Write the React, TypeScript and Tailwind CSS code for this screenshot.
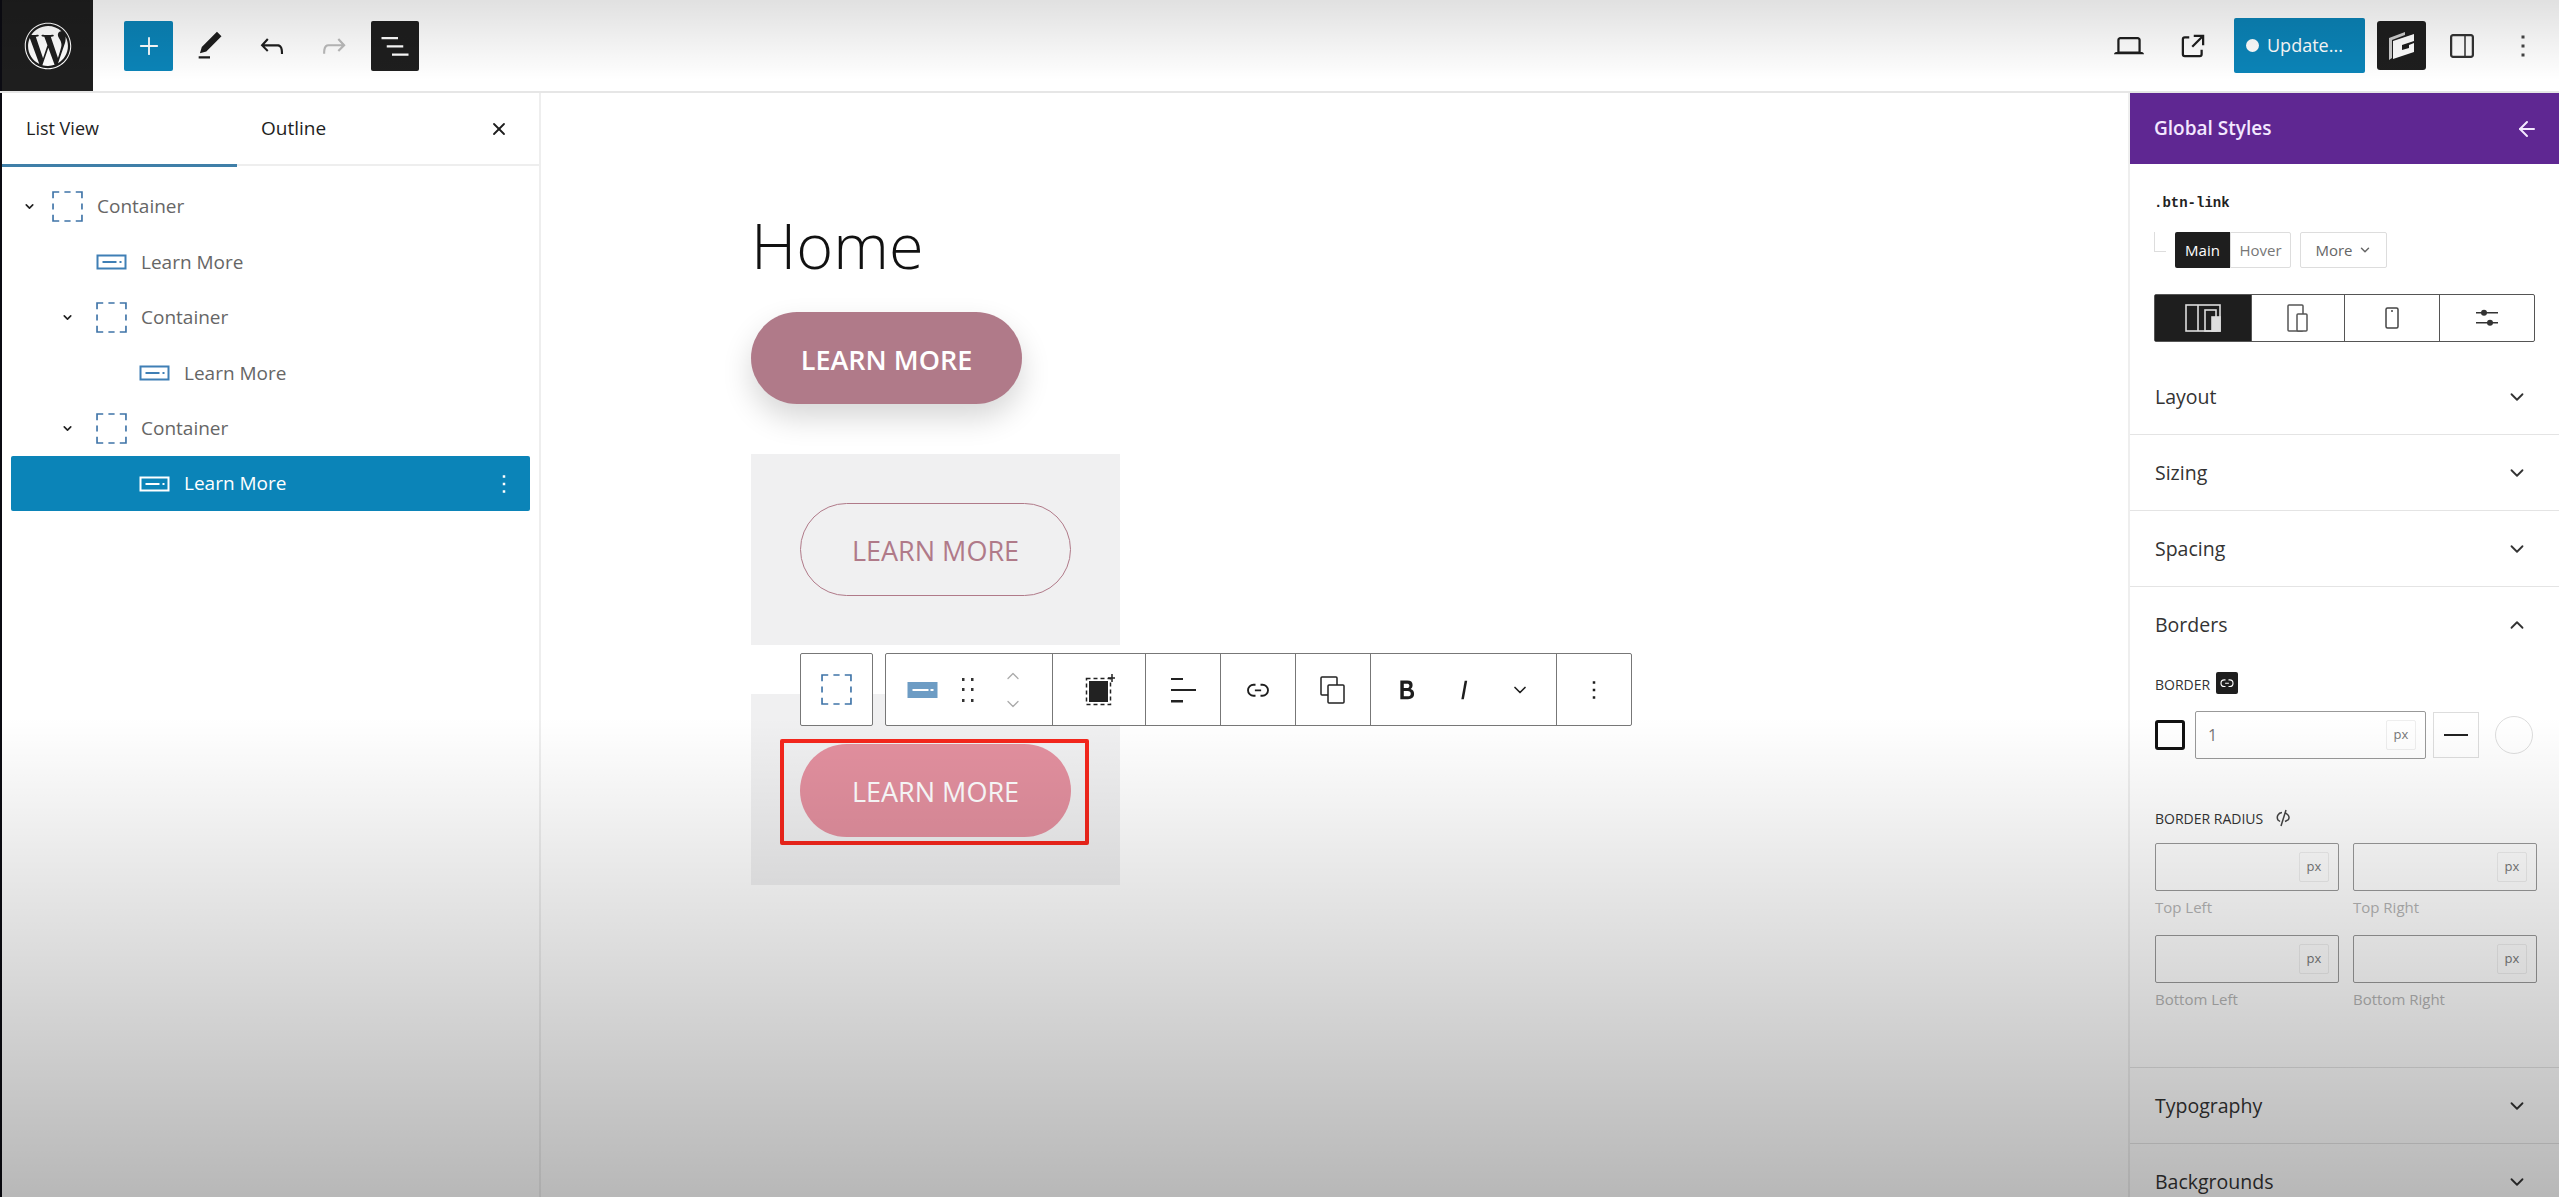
import React from "react";
import { FaWordpress } from "react-icons/fa";
import { ChevronDown, ChevronUp, ArrowLeft, X, Plus } from "lucide-react";

const P = ({ d, className = "", fill = "currentColor" }: { d: string; className?: string; fill?: string }) => (
  <svg viewBox="0 0 24 24" className={className} fill={fill}><path d={d} /></svg>
);

const ic = {
  pen: "M20.1 5.1L16.9 2 6.2 12.7l-1.3 4.4 4.5-1.3L20.1 5.1zM4 20.8h8v-1.5H4v1.5z",
  undo: "M18.3 11.7c-.6-.6-1.4-.9-2.3-.9H6.7l2.9-3.3-1.1-1-4.5 5L8.5 16l1-1-2.7-2.7H16c.5 0 .9.2 1.3.5 1 1 1 3.4 1 4.5v.3h1.5v-.2c0-1.5 0-4.3-1.5-5.7z",
  redo: "M15.6 6.5l-1.1 1 2.9 3.3H8c-.9 0-1.7.3-2.3.9-1.4 1.5-1.4 4.2-1.4 5.6v.2h1.5v-.3c0-1.1 0-3.5 1-4.5.3-.3.7-.5 1.3-.5h9.2L14.5 15l1.1 1.1 4.6-4.6-4.6-5z",
  list: "M3 6h11v1.5H3V6zm3.5 5.5h11V13h-11v-1.5zM21 17H10v1.5h11V17z",
  laptop: "M20.5 16h-.7V8c0-1.1-.9-2-2-2H6.2c-1.1 0-2 .9-2 2v8h-.7c-.8 0-1.5.7-1.5 1.5h20c0-.8-.7-1.5-1.5-1.5zM5.7 8c0-.3.2-.5.5-.5h11.6c.3 0 .5.2.5.5v7.6H5.7V8z",
  ext: "M19.5 4.5h-7V6h4.44l-5.97 5.97 1.06 1.06L18 7.06v4.44h1.5v-7Zm-13 1a2 2 0 0 0-2 2v10a2 2 0 0 0 2 2h10a2 2 0 0 0 2-2v-3H17v3a.5.5 0 0 1-.5.5h-10a.5.5 0 0 1-.5-.5v-10a.5.5 0 0 1 .5-.5h3V5.5h-3Z",
  kebab: "M13 19h-2v-2h2v2zm0-6h-2v-2h2v2zm0-6h-2V5h2v2z",
  link: "M10 17.389H8.444A5.194 5.194 0 1 1 8.444 7H10v1.5H8.444a3.694 3.694 0 0 0 0 7.389H10v1.5ZM14 7h1.556a5.194 5.194 0 0 1 0 10.39H14v-1.5h1.556a3.694 3.694 0 0 0 0-7.39H14V7Zm-4.5 6h5v-1.5h-5V13Z",
  bold: "M14.7 11.3c1-.6 1.5-1.6 1.5-3 0-2.3-1.3-3.4-4-3.4H7v14h5.8c1.4 0 2.5-.3 3.3-1 .8-.7 1.2-1.7 1.2-2.9.1-1.9-.8-3.1-2.6-3.7zm-5.1-4h2.3c.6 0 1.1.1 1.4.4.3.3.5.7.5 1.2s-.2 1-.5 1.2c-.3.3-.8.4-1.4.4H9.6V7.3zm4.6 9c-.4.3-1 .4-1.7.4H9.6v-3.9h2.9c.7 0 1.3.2 1.7.5.4.3.6.8.6 1.5s-.2 1.2-.6 1.5z",
  italic: "M12.5 5L10 19h1.9l2.5-14z",
};

const ContainerIcon = ({ className = "" }: { className?: string }) => (
  <svg viewBox="0 0 30 30" className={className} fill="none" stroke="#3f74a8" strokeWidth="1.6">
    <path d="M1 7V1h6M12 1h6M23 1h6v6M29 12v6M29 23v6h-6M18 29h-6M7 29H1v-6M1 18v-6" />
  </svg>
);

const ButtonIcon = ({ className = "", color = "#3f7fb5" }: { className?: string; color?: string }) => (
  <svg viewBox="0 0 30 16" className={className} fill="none" stroke={color}>
    <rect x="1" y="1.5" width="28" height="13" strokeWidth="2" />
    <path d="M6 8h14" strokeWidth="2" />
    <path d="M23 8h2" strokeWidth="2" />
  </svg>
);

function TreeRow({ indent, chevron, label, kind, selected, chevW = 23 }: { indent: number; chevron?: boolean; label: string; kind: "c" | "b"; selected?: boolean; chevW?: number }) {
  const base = selected ? "bg-[#0b84b8] text-white rounded-[2px]" : "text-[#666]";
  return (
    <div className={`relative flex h-[55.4px] items-center ${base}`}>
      <div className="flex items-center" style={{ paddingLeft: indent }}>
        <div className="flex justify-start" style={{ width: chevW }}>
          {chevron && <ChevronDown className="h-[13px] w-[13px] text-[#222]" strokeWidth={3} />}
        </div>
        {kind === "c" ? <ContainerIcon className="h-[31px] w-[31px]" /> : <ButtonIcon className="h-[16px] w-[31px]" color={selected ? "#fff" : "#3f7fb5"} />}
        <span className="ml-[14px] text-[19px]">{label}</span>
      </div>
      {selected && <P d={ic.kebab} className="absolute right-[11px] h-[30px] w-[30px] text-white" />}
    </div>
  );
}

function LeftPanel() {
  return (
    <aside className="w-[539px] shrink-0 border-r-2 border-[#eeeeee] bg-white">
      <div className="flex h-[73px] items-center border-b-2 border-[#eeeeee] text-[18px] text-[#1e1e1e]">
        <div className="relative flex h-[73px] w-[235px] items-center pl-[24px]">
          List View
          <div className="absolute bottom-[-2px] left-0 h-[3px] w-full bg-[#3f7fa8]" />
        </div>
        <div className="flex h-full flex-1 items-center pl-[24px] text-[19px]">Outline</div>
        <X className="mr-[30px] h-[20px] w-[20px] text-[#1e1e1e]" strokeWidth={2.2} />
      </div>
      <div className="px-[9px] pt-[13px]">
        <TreeRow indent={12} chevW={29} chevron label="Container" kind="c" />
        <TreeRow indent={62} label="Learn More" kind="b" />
        <TreeRow indent={50} chevW={35} chevron label="Container" kind="c" />
        <TreeRow indent={105} label="Learn More" kind="b" />
        <TreeRow indent={50} chevW={35} chevron label="Container" kind="c" />
        <TreeRow indent={105} label="Learn More" kind="b" selected />
      </div>
    </aside>
  );
}

const cellLine = "flex h-full items-center justify-center border-r border-[#777]";

function BlockToolbar() {
  return (
    <div className="absolute left-[259px] top-[560px] flex h-[73px] gap-[12px] text-[#1e1e1e]">
      <div className="flex w-[73px] items-center justify-center rounded-[2px] border border-[#777] bg-white">
        <ContainerIcon className="h-[31px] w-[31px]" />
      </div>
      <div className="flex w-[747px] rounded-[2px] border border-[#777] bg-white">
        <div className={`${cellLine} w-[167px] justify-start pl-[21px]`}>
          <svg viewBox="0 0 30 16" className="h-[16px] w-[31px]"><rect width="30" height="16" fill="#6d9cc4" /><path d="M5 8h16M23 8h3" stroke="#fff" strokeWidth="2" /></svg>
          <svg viewBox="0 0 16 26" className="ml-[22px] h-[26px] w-[16px] text-[#333]" fill="currentColor">
            <rect x="2" y="1" width="2.5" height="3" /><rect x="11" y="1" width="2.5" height="3" />
            <rect x="2" y="11" width="2.5" height="3" /><rect x="11" y="11" width="2.5" height="3" />
            <rect x="2" y="22" width="2.5" height="3" /><rect x="11" y="22" width="2.5" height="3" />
          </svg>
          <div className="ml-[27px] flex flex-col gap-[8px] text-[#aaa]">
            <ChevronUp className="h-[20px] w-[20px]" strokeWidth={1.5} />
            <ChevronDown className="h-[20px] w-[20px]" strokeWidth={1.5} />
          </div>
        </div>
        <div className={`${cellLine} w-[93px]`}>
          <svg viewBox="0 0 32 32" className="h-[32px] w-[32px]" fill="none" stroke="#222">
            <rect x="6" y="7" width="19" height="21" fill="#222" stroke="none" />
            <rect x="3.5" y="4.5" width="24" height="26" strokeDasharray="4 3" strokeWidth="1.5" />
            <path d="M29 0v8M25 4h8" strokeWidth="1.5" />
          </svg>
        </div>
        <div className={`${cellLine} w-[75px]`}>
          <svg viewBox="0 0 26 26" className="h-[26px] w-[26px]" fill="#222">
            <rect x="1" y="1" width="12" height="2" /><rect x="1" y="12" width="25" height="2" /><rect x="1" y="23" width="12" height="2.5" />
          </svg>
        </div>
        <div className={`${cellLine} w-[75px]`}><P d={ic.link} className="h-[30px] w-[30px]" /></div>
        <div className={`${cellLine} w-[75px]`}>
          <svg viewBox="0 0 28 28" className="h-[28px] w-[28px]" fill="#fff" stroke="#222" strokeWidth="1.5">
            <rect x="2" y="1" width="16" height="18" rx="1" />
            <rect x="9" y="9" width="16" height="18" rx="1" />
          </svg>
        </div>
        <div className={`${cellLine} w-[186px] justify-start`}>
          <P d={ic.bold} className="ml-[20px] h-[32px] w-[32px]" />
          <P d={ic.italic} className="ml-[25px] h-[32px] w-[32px]" />
          <ChevronDown className="ml-[30px] h-[20px] w-[20px]" strokeWidth={2} />
        </div>
        <div className="flex h-full flex-1 items-center justify-center"><P d={ic.kebab} className="h-[30px] w-[30px]" /></div>
      </div>
    </div>
  );
}

const labelFont = "font-['Open_Sans',sans-serif] text-[27px] leading-none pt-[2px]";

function Canvas() {
  return (
    <main className="relative flex-1 bg-white px-[210px] pt-[118px]">
      <h1 className="text-[63px] font-light leading-[68px] text-[#111]">Home</h1>
      <button className={`mt-[33px] block h-[92px] w-[271px] rounded-full bg-[#b07a89] font-semibold text-white shadow-[0_14px_30px_rgba(0,0,0,0.16)] ${labelFont}`}>LEARN MORE</button>
      <section className="mt-[50px] h-[191px] w-[369px] bg-[#f0f0f1] pl-[49px] pt-[49px]">
        <button className={`h-[93px] w-[271px] rounded-full border border-[#b07a89] font-medium text-[#b07a89] ${labelFont}`}>LEARN MORE</button>
      </section>
      <section className="mt-[49px] h-[191px] w-[369px] bg-[#f0f0f1] pl-[29px] pt-[45px]">
        <div className="h-[106px] w-[309px] rounded-[2px] border-[4px] border-[#f5261c] pl-[16px] pt-[1px]">
          <button className={`h-[93px] w-[271px] rounded-full bg-[#e3909f] font-medium text-white ${labelFont}`}>LEARN MORE</button>
        </div>
      </section>
      <BlockToolbar />
    </main>
  );
}

function AccRow({ label, open }: { label: string; open?: boolean }) {
  return (
    <div className={`flex h-[76px] items-center justify-between pl-[25px] pr-[31px] text-[19.5px] text-[#333] ${open ? "" : "border-b border-[#e4e4e4]"}`}>
      <span>{label}</span>
      {open ? <ChevronUp className="h-[22px] w-[22px]" strokeWidth={2} /> : <ChevronDown className="h-[22px] w-[22px]" strokeWidth={2} />}
    </div>
  );
}

function Px({ cls = "" }: { cls?: string }) {
  return <span className={`flex h-[30px] w-[30px] items-center justify-center rounded-[2px] border border-[#eee] text-[13px] text-[#777] ${cls}`}>px</span>;
}

function Radius({ label }: { label: string }) {
  return (
    <div>
      <div className="flex h-[48px] w-[184px] items-center justify-end rounded-[2px] border border-[#999] pr-[9px]"><Px /></div>
      <div className="mt-[8px] text-[15px] leading-[16px] text-[#b5b5b5]">{label}</div>
    </div>
  );
}

function RightPanel() {
  return (
    <aside className="w-[431px] shrink-0 border-l-2 border-[#eeeeee] bg-white">
      <div className="flex h-[71px] items-center justify-between bg-[#5f2792] pl-[24px] pr-[20px] text-[#f3e8ff]">
        <span className="text-[19px] font-semibold">Global Styles</span>
        <ArrowLeft className="h-[24px] w-[24px]" strokeWidth={2} />
      </div>
      <div className="pl-[24px] pt-[30px]">
        <div className="font-['Liberation_Mono',monospace] text-[14px] font-bold leading-[18px] text-[#222]">.btn-link</div>
        <div className="relative mt-[20px] flex h-[36px] pl-[21px] text-[15px]">
          <div className="absolute left-0 top-0 h-[20px] w-[12px] border-b border-l border-[#ddd]" />
          <span className="flex w-[55px] items-center justify-center rounded-l-[2px] bg-[#1e1e1e] text-white">Main</span>
          <span className="flex w-[61px] items-center justify-center rounded-r-[2px] border border-[#ddd] text-[#777]">Hover</span>
          <span className="ml-[9px] flex w-[87px] items-center justify-center gap-[5px] rounded-[2px] border border-[#ddd] text-[#666]">More <ChevronDown className="h-[14px] w-[14px]" strokeWidth={2.5} /></span>
        </div>
        <div className="mt-[26px] flex h-[48px] w-[381px] rounded-[2px] border border-[#555]">
          <div className="flex w-[96px] items-center justify-center bg-[#1e1e1e]">
            <svg viewBox="0 0 36 28" className="h-[28px] w-[36px]" fill="none" stroke="#ddd" strokeWidth="1.6">
              <rect x="1" y="1" width="34" height="26" /><path d="M13 1v26" /><rect x="20" y="6" width="11" height="21" /><rect x="27" y="13" width="8" height="14" fill="#ddd" />
            </svg>
          </div>
          <div className="flex w-[94px] items-center justify-center border-x border-[#555]">
            <svg viewBox="0 0 24 28" className="h-[28px] w-[24px]" fill="#fff" stroke="#555" strokeWidth="1.5">
              <rect x="2" y="1" width="15" height="26" rx="1" /><rect x="11" y="10" width="10" height="17" rx="1" />
            </svg>
          </div>
          <div className="flex w-[95px] items-center justify-center border-r border-[#555]">
            <svg viewBox="0 0 14 22" className="h-[22px] w-[14px]" fill="none" stroke="#444" strokeWidth="1.5"><rect x="1" y="1" width="12" height="20" rx="1.5" /><path d="M6 4h2" /></svg>
          </div>
          <div className="flex flex-1 items-center justify-center">
            <svg viewBox="0 0 22 18" className="h-[18px] w-[22px]" fill="#333"><rect y="3" width="22" height="1.5" /><rect y="13" width="22" height="1.5" /><circle cx="8" cy="3.7" r="3" /><circle cx="14" cy="13.7" r="3" /></svg>
          </div>
        </div>
      </div>
      <div className="mt-[17px]">
        <AccRow label="Layout" />
        <AccRow label="Sizing" />
        <AccRow label="Spacing" />
        <AccRow label="Borders" open />
      </div>
      <div className="pl-[25px] pr-[20px] pt-[9px]">
        <div className="flex h-[24px] items-center gap-[6px] text-[14px] text-[#333]">
          BORDER
          <span className="-mt-[3px] flex h-[22px] w-[22px] items-center justify-center rounded-[2px] bg-[#1e1e1e]"><P d={ic.link} className="h-[18px] w-[18px] text-white" /></span>
        </div>
        <div className="mt-[15px] flex items-center">
          <span className="h-[30px] w-[30px] rounded-[3px] border-[3px] border-[#111]" />
          <div className="ml-[10px] flex h-[48px] w-[231px] items-center justify-between rounded-[2px] border border-[#999] pl-[12px] pr-[9px] text-[#777]">
            <span className="text-[16px]">1</span><Px />
          </div>
          <div className="ml-[7px] flex h-[46px] w-[46px] items-center justify-center border border-[#ddd]"><span className="h-[2px] w-[24px] bg-[#222]" /></div>
          <span className="ml-[16px] h-[38px] w-[38px] rounded-full border border-[#ddd]" />
        </div>
        <div className="mt-[47px] flex h-[24px] items-center gap-[10px] text-[14px] text-[#333]">
          BORDER RADIUS
          <svg viewBox="0 0 20 20" className="h-[20px] w-[20px]" fill="none" stroke="#444" strokeWidth="1.5">
            <path d="M9 4.5A5 5 0 0 0 5 12l2 1.5M8 18l5-16M12 4.5l3 2.5a3.5 3.5 0 0 1 0 5l-3 1.5" />
          </svg>
        </div>
        <div className="mt-[13px] grid w-[382px] grid-cols-[184px_184px] gap-x-[14px] gap-y-[20px]">
          <Radius label="Top Left" />
          <Radius label="Top Right" />
          <Radius label="Bottom Left" />
          <Radius label="Bottom Right" />
        </div>
      </div>
      <div className="mt-[60px] border-t border-[#e4e4e4]">
        <AccRow label="Typography" />
        <AccRow label="Backgrounds" />
      </div>
    </aside>
  );
}

function TopBar() {
  return (
    <header className="flex h-[93px] items-center border-b-2 border-[#e6e6e6] bg-white">
      <div className="flex h-[91px] w-[93px] items-center justify-center border-l-2 border-[#0b0b12] bg-[#1e1e1e]">
        <FaWordpress className="h-[48px] w-[48px] text-white" />
      </div>
      <div className="ml-[31px] flex h-[50px] w-[49px] items-center justify-center rounded-[2px] bg-[#0b84b8]"><Plus className="h-[28px] w-[28px] text-white" strokeWidth={1.6} /></div>
      <P d={ic.pen} className="ml-[20px] h-[34px] w-[34px] text-[#1e1e1e]" />
      <P d={ic.undo} className="ml-[28px] h-[34px] w-[34px] text-[#1e1e1e]" />
      <P d={ic.redo} className="ml-[28px] h-[34px] w-[34px] text-[#bbb]" />
      <div className="ml-[20px] flex h-[50px] w-[48px] items-center justify-center rounded-[2px] bg-[#1e1e1e]"><P d={ic.list} className="h-[36px] w-[36px] text-white" /></div>
      <div className="ml-auto flex items-center">
        <P d={ic.laptop} className="h-[36px] w-[36px] text-[#1e1e1e]" />
        <P d={ic.ext} className="ml-[28px] h-[36px] w-[36px] text-[#1e1e1e]" />
        <div className="ml-[23px] flex h-[55px] w-[131px] items-center gap-[8px] rounded-[2px] bg-[#0b84b8] pl-[12px] text-[18px] text-white">
          <span className="h-[13px] w-[13px] rounded-full bg-white" />Update...
        </div>
        <div className="ml-[12px] flex h-[49px] w-[49px] items-center justify-center rounded-[3px] bg-[#1e1e1e]">
          <svg viewBox="0 0 28 32" className="h-[32px] w-[28px]">
            <path d="M1 8l16-6v3L4 10v18l-3 2z" fill="#ccc" />
            <path d="M5 11l21-7v7l-12 4v5l7-2v-3l5-2v9L5 29z" fill="#fff" />
          </svg>
        </div>
        <P d="M18 4H6c-1.1 0-2 .9-2 2v12c0 1.1.9 2 2 2h12c1.1 0 2-.9 2-2V6c0-1.1-.9-2-2-2zM6 5.5h7.5v13H6c-.3 0-.5-.2-.5-.5V6c0-.3.2-.5.5-.5zm12.5 12.5c0 .3-.2.5-.5.5h-3.5v-13H18c.3 0 .5.2.5.5v12z" className="ml-[18px] h-[36px] w-[36px] text-[#333]" />
        <P d={ic.kebab} className="ml-[25px] mr-[18px] h-[36px] w-[36px] text-[#444]" />
      </div>
    </header>
  );
}

export default function App() {
  return (
    <div className="relative flex h-[1197px] w-[2559px] flex-col overflow-hidden bg-white font-['Open_Sans',sans-serif]">
      <TopBar />
      <div className="flex flex-1 border-l-2 border-[#0b0b12]">
        <LeftPanel />
        <Canvas />
        <RightPanel />
      </div>
      <div className="pointer-events-none absolute inset-x-0 top-0 h-[80px] bg-gradient-to-b from-black/12 to-transparent" />
      <div className="pointer-events-none absolute inset-x-0 bottom-0 h-[480px] bg-gradient-to-b from-transparent to-black/28" />
    </div>
  );
}
